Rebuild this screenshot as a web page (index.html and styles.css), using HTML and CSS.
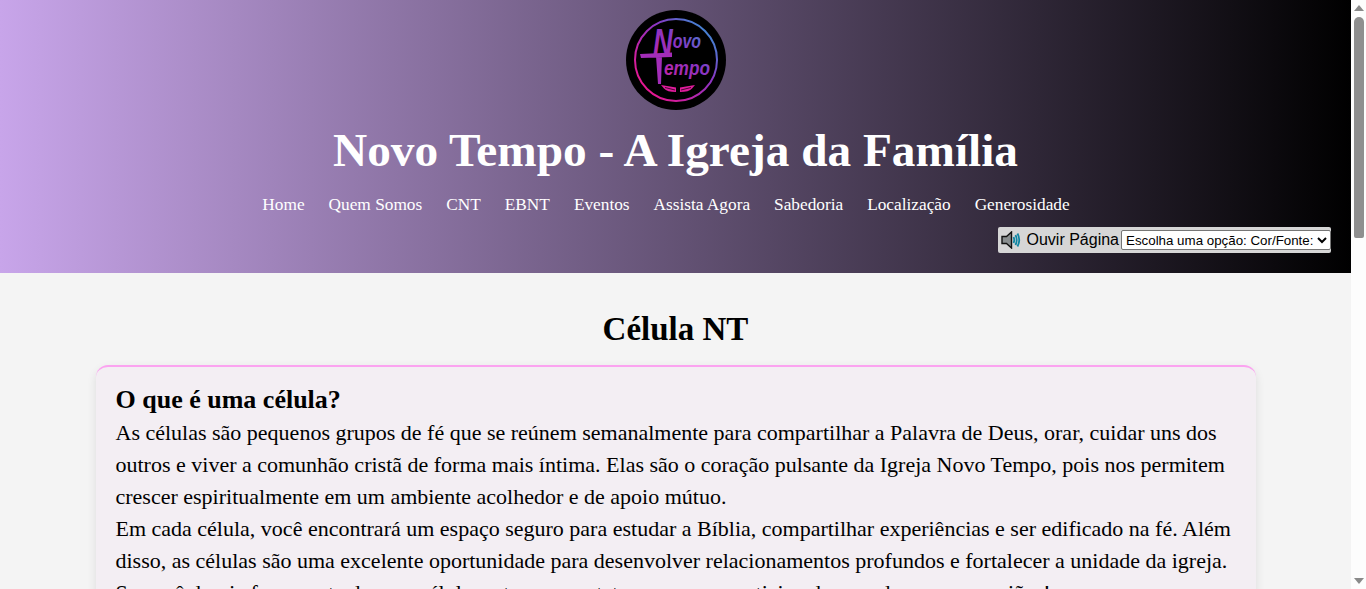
FILE: index.html
```html
<!DOCTYPE html>
<html lang="pt-BR">
  <head>
    <meta charset="utf-8">
    <meta name="viewport" content="width=device-width,initial-scale=1.0">
    <title>Novo Tempo - A Igreja da Família</title>
    <link rel="stylesheet" href="styles.css">
  </head>
  <body>
    <header class="site-header">
      <svg class="logo" viewBox="0 0 100 100" role="img" aria-label="Novo Tempo">
        <defs>
          <linearGradient id="ring" gradientUnits="userSpaceOnUse" x1="88" y1="15" x2="18" y2="85">
            <stop offset="0" stop-color="#2f9ad6"/>
            <stop offset="0.4" stop-color="#8a35c4"/>
            <stop offset="1" stop-color="#f0148c"/>
          </linearGradient>
        </defs>
        <circle cx="50" cy="50" r="50" fill="#000"/>
        <circle cx="50" cy="50" r="41" fill="none" stroke="url(#ring)" stroke-width="2"/>
        <text class="logo-big" x="27" y="45" textLength="48" lengthAdjust="spacingAndGlyphs" fill="url(#ring)">N<tspan class="logo-small" dy="-7">ovo</tspan></text>
        <text class="logo-small" x="38" y="65" textLength="46" lengthAdjust="spacingAndGlyphs" fill="url(#ring)">empo</text>
        <path d="M14 44 L46 42.5 L46 47 L15 48 Z M30 46 L36 46 L35 74 L32 74 Z" fill="#a32db8"/>
        <path d="M35 75 L50 77.5 L50 82 Q41 82 38 78.5 Z M69 75 L54 77.5 L54 82 Q63 82 66 78.5 Z" fill="#e01c9c"/>
        <path d="M39 77.5 L49 80 M65 77.5 L55 80" stroke="#000" stroke-width="0.7"/>
      </svg>
      <h1 class="site-title">Novo Tempo - A Igreja da Família</h1>
      <nav class="main-nav">
        <a href="#">Home</a>
        <a href="#">Quem Somos</a>
        <a href="#">CNT</a>
        <a href="#">EBNT</a>
        <a href="#">Eventos</a>
        <a href="#">Assista Agora</a>
        <a href="#">Sabedoria</a>
        <a href="#">Localização</a>
        <a href="#">Generosidade</a>
      </nav>
      <div class="tools">
        <div class="tools-box">
          <svg class="speaker" viewBox="0 0 20 18">
            <path d="M1 5.5 H5.5 L10.5 1 V17 L5.5 12.5 H1 Z" fill="#8a8f90" stroke="#111" stroke-width="1.4"/>
            <path d="M12.5 6 Q14 9 12.5 12 M14.5 4 Q17 9 14.5 14 M16.5 2.5 Q20 9 16.5 15.5" fill="none" stroke="#0f86a3" stroke-width="1.8"/>
          </svg>
          <span class="listen">Ouvir Página</span>
          <select class="theme-select">
            <option>Escolha uma opção: Cor/Fonte:</option>
          </select>
        </div>
      </div>
    </header>
    <main class="content">
      <h2 class="page-title">Célula NT</h2>
      <section class="card">
        <h3>O que é uma célula?</h3>
        <p>As células são pequenos grupos de fé que se reúnem semanalmente para compartilhar a Palavra de Deus, orar, cuidar uns dos outros e viver a comunhão cristã de forma mais íntima. Elas são o coração pulsante da Igreja Novo Tempo, pois nos permitem crescer espiritualmente em um ambiente acolhedor e de apoio mútuo.</p>
        <p>Em cada célula, você encontrará um espaço seguro para estudar a Bíblia, compartilhar experiências e ser edificado na fé. Além disso, as células são uma excelente oportunidade para desenvolver relacionamentos profundos e fortalecer a unidade da igreja.</p>
        <p>Se você deseja fazer parte de uma célula, entre em contato conosco e participe de uma de nossas reuniões!</p>
      </section>
    </main>
    <div class="scrollbar">
      <span class="arrow-up"></span>
      <span class="thumb"></span>
      <span class="arrow-down"></span>
    </div>
  </body>
</html>
```

FILE: styles.css
```css
body { margin: 0 15px 0 0; background: #f4f4f4; color: #000; font-family: "Liberation Serif", serif; }

.site-header {
  background: linear-gradient(to right, #c8a5ea, #000);
  color: #fff;
  text-align: center;
  padding: 10px 20px 20px;
  height: 243px;
}
.logo { display: block; width: 100px; height: 100px; margin: 0 auto; }
.logo-big { font: italic 700 36px "Liberation Sans", sans-serif; }
.logo-small { font: italic 700 21px "Liberation Sans", sans-serif; }
.site-title { margin: 18px 0 0; font-size: 47.3px; line-height: 44px; font-weight: 700; }
.main-nav { display: flex; justify-content: center; gap: 24px; margin-top: 23px; padding-right: 19px; font-size: 17.3px; line-height: 20px; }
.main-nav a { color: #fff; text-decoration: none; }
.tools { display: flex; justify-content: flex-end; margin-top: 12px; }
.tools-box { display: flex; align-items: center; height: 26px; background: #d6d6d6; border-radius: 2px; font-family: "Liberation Sans", sans-serif; color: #000; }
.speaker { width: 20px; height: 18px; margin: 0 6px 0 3px; }
.listen { font-size: 16px; margin-right: 2px; }
.theme-select { width: 210px; height: 20px; font: 13.33px "Liberation Sans", sans-serif; background: #fff; border: 1px solid #767676; border-radius: 2px; padding: 0; }

.content { max-width: 1160px; margin: 0 auto; padding: 0 0 40px; }
.page-title { margin: 0; padding-top: 38px; font-size: 33px; line-height: 36px; text-align: center; font-weight: 700; }
.card {
  margin-top: 18px;
  padding: 21px 20px 20px;
  background: #f3eef3;
  border-top: 2px solid #fba3f0;
  border-radius: 12px;
  box-shadow: 0 4px 10px rgba(0, 0, 0, 0.1);
  font-size: 22px;
  line-height: 32px;
}
.card h3 { margin: 0; font-size: 26px; line-height: 24px; padding-bottom: 5px; }
.card p { margin: 0; }

/* browser hides the real one in the photo */
.scrollbar { position: fixed; top: 0; right: 0; bottom: 0; width: 15px; background: #fdfdfd; display: flex; flex-direction: column; align-items: center; }
.arrow-up { margin-top: 5px; border: 5px solid transparent; border-top: 0; border-bottom: 6px solid #8a8a8a; }
.thumb { width: 10px; height: 221px; margin-top: 6px; background: #8f8f8f; border-radius: 5px 5px 2px 2px; }
.arrow-down { margin-top: auto; margin-bottom: 5px; border: 5px solid transparent; border-bottom: 0; border-top: 6px solid #8a8a8a; }
```
